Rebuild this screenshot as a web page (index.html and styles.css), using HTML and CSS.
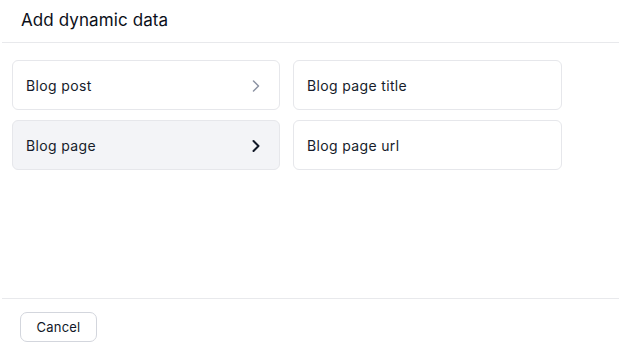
FILE: index.html
```html
<!DOCTYPE html>
<html>
<head>
<meta charset="utf-8">
<link rel="stylesheet" href="styles.css">
</head>
<body>
<div class="modal">
  <div class="header"><h1 class="title">Add dynamic data</h1></div>
  <div class="body">
    <div class="grid">
      <div class="card">
        <span class="label">Blog post</span>
        <svg class="chev chev-muted" width="10" height="14" viewBox="0 0 10 14"><path d="M2.5 2l5 5-5 5" fill="none" stroke="currentColor" stroke-width="1.5" stroke-linecap="round" stroke-linejoin="round"/></svg>
      </div>
      <div class="card"><span class="label">Blog page title</span></div>
      <div class="card card-active">
        <span class="label">Blog page</span>
        <svg class="chev" width="10" height="14" viewBox="0 0 10 14"><path d="M2.5 2l5 5-5 5" fill="none" stroke="currentColor" stroke-width="2" stroke-linecap="round" stroke-linejoin="round"/></svg>
      </div>
      <div class="card"><span class="label">Blog page url</span></div>
    </div>
  </div>
  <div class="footer"><button class="btn">Cancel</button></div>
</div>
</body>
</html>
```
FILE: styles.css
```css
* { box-sizing: border-box; }
html, body { margin: 0; padding: 0; background: #fff; }
body { font-family: Inter, "Noto Sans", sans-serif; }
.modal {
  margin-left: 2px;
  width: 617px;
  height: 358px;
  display: flex;
  flex-direction: column;
}
.header {
  height: 43px;
  border-bottom: 1px solid #e8e9ec;
  padding: 0 19px;
  display: flex;
  align-items: center;
}
.title {
  margin: 0;
  font-size: 17px;
  font-weight: 400;
  color: #0b0f19;
  padding-bottom: 3px;
  letter-spacing: 0.1px;
}
.body {
  flex: 1;
  padding: 17px 10px;
}
.grid {
  display: grid;
  grid-template-columns: 268px 269px;
  column-gap: 13px;
  row-gap: 10px;
}
.card {
  height: 50px;
  border: 1px solid #e6e7eb;
  border-radius: 6px;
  display: flex;
  align-items: center;
  justify-content: space-between;
  padding: 1px 18px 0 13px;
  background: #fff;
}
.card-active { background: #f3f4f7; }
.label {
  font-size: 14px;
  font-weight: 400;
  color: #161c2b;
  letter-spacing: 0.35px;
}
.chev { color: #111827; }
.chev-muted { color: #8c93a3; }
.footer {
  border-top: 1px solid #e8e9ec;
  padding: 13px 18px 16px;
  height: 60px;
}
.btn {
  width: 77px;
  height: 30px;
  border: 1px solid #d3d6dd;
  border-radius: 7px;
  background: #fff;
  font-family: Inter, "Noto Sans", sans-serif;
  font-size: 13px;
  font-weight: 400;
  color: #111827;
  padding: 0;
  letter-spacing: 0.2px;
}
```
